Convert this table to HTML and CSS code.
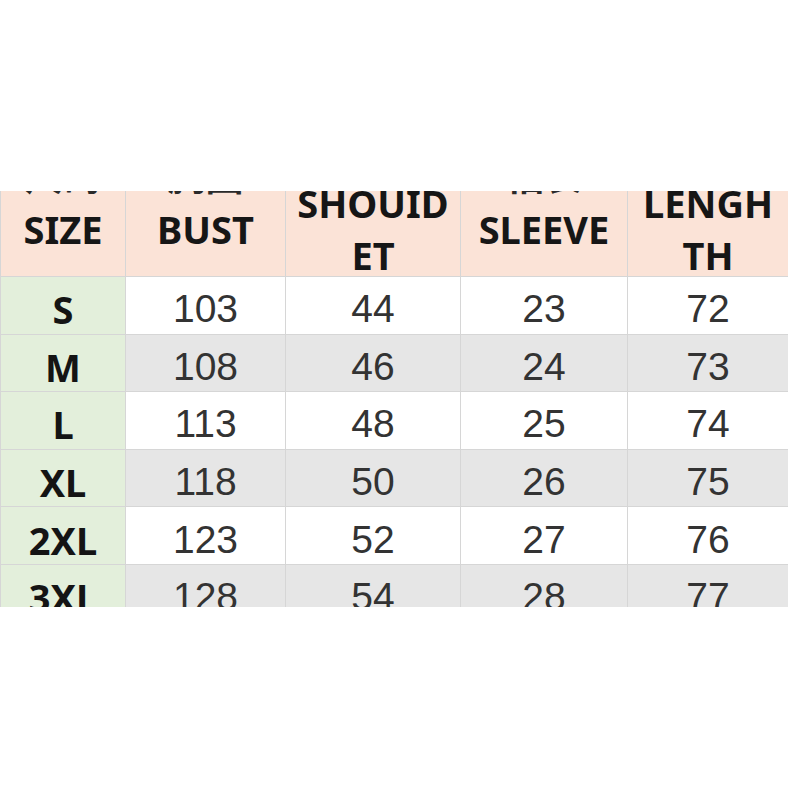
FILE: index.html
```html
<!DOCTYPE html>
<html lang="zh">
<head>
<meta charset="utf-8">
<title>Size chart</title>
<link rel="stylesheet" href="styles.css">
</head>
<body>
<div class="frame">
  <div class="clip">
    <table class="chart">
      <colgroup>
        <col class="c1"><col class="c2"><col class="c3"><col class="c4"><col class="c5">
      </colgroup>
      <thead>
        <tr>
          <th><div class="hd"><span class="cn">尺码</span><br>SIZE</div></th>
          <th><div class="hd"><span class="cn">胸围</span><br>BUST</div></th>
          <th><div class="hd"><span class="cn">肩宽</span><br>SHOUID<br>ET</div></th>
          <th><div class="hd"><span class="cn">袖长</span><br>SLEEVE</div></th>
          <th><div class="hd"><span class="cn">衣长</span><br>LENGH<br>TH</div></th>
        </tr>
      </thead>
      <tbody>
        <tr><td class="size">S</td><td>103</td><td>44</td><td>23</td><td>72</td></tr>
        <tr class="alt"><td class="size">M</td><td>108</td><td>46</td><td>24</td><td>73</td></tr>
        <tr><td class="size">L</td><td>113</td><td>48</td><td>25</td><td>74</td></tr>
        <tr class="alt"><td class="size">XL</td><td>118</td><td>50</td><td>26</td><td>75</td></tr>
        <tr><td class="size">2XL</td><td>123</td><td>52</td><td>27</td><td>76</td></tr>
        <tr class="alt"><td class="size">3XL</td><td>128</td><td>54</td><td>28</td><td>77</td></tr>
      </tbody>
    </table>
  </div>
</div>
</body>
</html>
```

FILE: styles.css
```css
html, body {
  margin: 0;
  padding: 0;
  background: #ffffff;
}

.frame {
  width: 800px;
  height: 800px;
  padding-top: 191px;
  box-sizing: border-box;
}

.clip {
  width: 788px;
  height: 416px;
  overflow: hidden;
}

.chart {
  border-collapse: collapse;
  table-layout: fixed;
  width: 788px;
  margin-top: -72px;
}

.c1 { width: 125px; }
.c2 { width: 160px; }
.c3 { width: 175px; }
.c4 { width: 167px; }
.c5 { width: 161px; }

.chart th,
.chart td {
  border: 1px solid #d6d6d6;
  padding: 0;
  text-align: center;
  vertical-align: middle;
}

.chart th {
  background: #fbe3d7;
  font-family: "Noto Sans", "Noto Sans CJK SC", sans-serif;
  font-weight: 700;
  font-size: 38px;
  line-height: 52px;
  color: #161616;
}

.hd {
  margin-top: 5px;
  margin-bottom: -5px;
}

.chart thead tr {
  height: 156px;
}

.cn {
  font-family: "Noto Sans CJK SC", sans-serif;
  font-weight: 700;
  line-height: 0;
  vertical-align: 2px;
  color: #2a2a2a;
}

.chart tbody tr {
  height: 57.6px;
}

.chart td {
  padding-top: 8px;
  font-family: "Liberation Sans", Arial, sans-serif;
  font-size: 39px;
  line-height: 40px;
  color: #333333;
  background: #ffffff;
}

.chart tr.alt td {
  background: #e6e6e6;
}

.chart td.size,
.chart tr.alt td.size {
  background: #e3efdb;
  font-family: "Noto Sans", sans-serif;
  font-weight: 700;
  font-size: 38px;
  color: #141414;
}
```
